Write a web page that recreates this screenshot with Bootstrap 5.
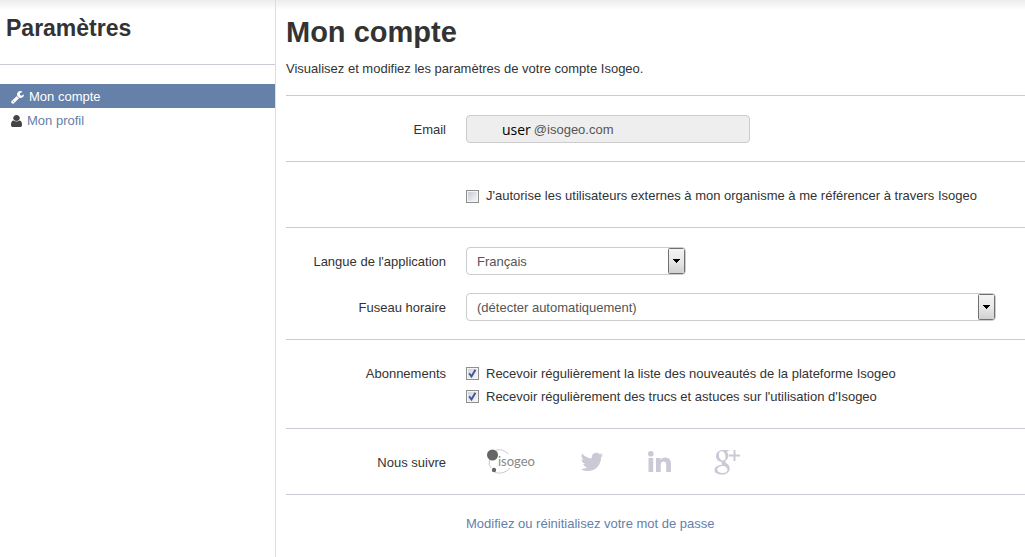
<!DOCTYPE html>
<html lang="fr">
<head>
<meta charset="utf-8">
<meta name="viewport" content="width=device-width, initial-scale=1">
<title>Mon compte - Isogeo</title>
<link rel="stylesheet" href="https://cdn.jsdelivr.net/npm/bootstrap@5.3.0/dist/css/bootstrap.min.css">
<style>
body{font:13px/18px "Liberation Sans",Arial,sans-serif;color:#333;background:#fff linear-gradient(#ececec,#fff) no-repeat 0 0/100% 10px}
a{color:#6580a9;text-decoration:none}
.side-panel{width:276px;border-right:1px solid #dcdce2}
.side-title{font-size:23px;line-height:28px;font-weight:700;padding:14px 6px 22px;border-bottom:1px solid #cac9d6}
.side-links{padding-top:19px}
.side-links .nav-link{height:24px;padding:2px 11px 0;color:#6580a9;gap:5px}
.side-links .nav-link svg{fill:#444}
.side-links .nav-link.active{background:#6580a9;color:#fff}
.side-links .nav-link.active svg{fill:#fff}
.main-panel{padding-left:10px}
.main-panel h1{font-size:29px;line-height:36px;font-weight:700;padding-top:14px;margin-bottom:10px}
.block{border-bottom:1px solid #cac9d6;padding:19px 0 18px}
.head-block{padding:0 0 17px}
.two-lines{gap:18px}
.line{gap:20px;min-height:28px}
.line-label{width:160px;text-align:right;flex:none;padding-top:2px}
.top-label{padding-top:6px}
.field{height:28px;border:1px solid #ccc;border-radius:4px;color:#555;font-size:13px;line-height:18px}
.mail{width:284px;background:#eee;padding:2px 0 0 35px;gap:3px}
.mail span{font:14px/18px "Open Sans",sans-serif;color:#000}
.mail input{background:none;border:0;padding:0;color:#555;min-width:0}
.field.form-select{padding:5px 30px 3px 10px;background-color:#fff;background-origin:border-box;background-position:right 0 center;background-size:18px 26px;
background-image:url("data:image/svg+xml,%3Csvg xmlns='http://www.w3.org/2000/svg' viewBox='0 0 18 26'%3E%3Cdefs%3E%3ClinearGradient id='g' x2='0' y2='1'%3E%3Cstop stop-color='%23f4f4f4'/%3E%3Cstop offset='.5' stop-color='%23e8e8e8'/%3E%3Cstop offset='1' stop-color='%23cfcfcf'/%3E%3C/linearGradient%3E%3C/defs%3E%3Crect x='.5' y='.5' width='16' height='25' rx='1' fill='url(%23g)' stroke='%23707070'/%3E%3Cpath d='M5 11h7v1h-1v1h-1v1h-1v1h-1v-1h-1v-1h-1v-1h-1z'/%3E%3C/svg%3E")}
.lang{width:220px}
.zone{width:530px}
.check-row{gap:7px;height:23px}
.line > .check-row{padding-top:2px}
.tick{appearance:none;width:13px;height:13px;margin:0;flex:none;border:1px solid #8e8f8f;background:linear-gradient(135deg,#c8ccd2,#f6f6f6) content-box,#f4f4f4;padding:1px}
.tick:checked{background:url("data:image/svg+xml,%3Csvg xmlns='http://www.w3.org/2000/svg' viewBox='0 0 11 11'%3E%3Cpath d='M2.2 5.2l2.3 3.3L8.4 1.8' fill='none' stroke='%233f5795' stroke-width='1.9'/%3E%3C/svg%3E") center/11px 11px no-repeat padding-box,linear-gradient(135deg,#d2d5da,#f6f6f6) content-box,#f4f4f4}
.subs{padding:3px 0 2px}
.social svg{display:block}
.social a{fill:#cac9d6}
.social{padding-left:20px}
</style>
</head>
<body>
<div class="d-flex min-vh-100">
  <aside class="side-panel flex-shrink-0">
    <h2 class="side-title mb-0">Paramètres</h2>
    <nav class="side-links nav flex-column">
      <a class="nav-link active d-flex align-items-center" href="#compte" aria-current="page">
        <svg width="13" height="13" viewBox="0 128 1664 1664" aria-hidden="true"><path d="M384 1472q0-26-19-45t-45-19-45 19-19 45 19 45 45 19 45-19 19-45zm644-420l-682 682q-37 37-90 37-52 0-91-37l-106-108q-38-36-38-90 0-53 38-91l681-681q39 98 114.500 173.500t173.500 114.500zm634-435q0 39-23 106-47 134-164.500 217.500t-258.500 83.500q-185 0-316.500-131.500t-131.500-316.500 131.500-316.500 316.500-131.500q58 0 121.500 16.500t107.500 46.500q16 11 16 28t-16 28l-293 169v224l193 107q5-3 79-48.500t135.500-81 70.500-35.500q15 0 23.500 10t8.500 25z"/></svg>
        Mon compte</a>
      <a class="nav-link d-flex align-items-center" href="#profil">
        <svg width="11" height="12" viewBox="0 128 1280 1536" preserveAspectRatio="none" aria-hidden="true"><path d="M1280 1399q0 109-62.500 187t-150.500 78h-854q-88 0-150.500-78t-62.500-187q0-85 8.500-160.500t31.500-152 58.500-131 94-89 134.500-34.500q131 128 313 128t313-128q76 0 134.500 34.500t94 89 58.500 131 31.500 152 8.500 160.500zm-256-887q0 159-112.500 271.500t-271.500 112.500-271.500-112.500-112.500-271.500 112.500-271.500 271.500-112.500 271.500 112.500 112.500 271.500z"/></svg>
        Mon profil</a>
    </nav>
  </aside>

  <main class="main-panel flex-grow-1">
    <header class="block head-block">
      <h1>Mon compte</h1>
      <p class="mb-0">Visualisez et modifiez les paramètres de votre compte Isogeo.</p>
    </header>
    <form>
      <section class="block">
        <div class="line d-flex align-items-center">
          <label class="line-label" for="email">Email</label>
          <div class="field mail d-flex align-items-center"><span>user</span><input id="email" class="flex-grow-1" type="text" value="@isogeo.com" readonly></div>
        </div>
      </section>
      <section class="block">
        <div class="line d-flex align-items-center">
          <div class="line-label"></div>
          <div class="check-row d-flex align-items-center"><input class="tick" type="checkbox" id="ext"><label for="ext">J'autorise les utilisateurs externes à mon organisme à me référencer à travers Isogeo</label></div>
        </div>
      </section>
      <section class="block two-lines d-grid">
        <div class="line d-flex align-items-center">
          <label class="line-label" for="lang">Langue de l'application</label>
          <select class="form-select field lang" id="lang"><option>Français</option></select>
        </div>
        <div class="line d-flex align-items-center">
          <label class="line-label" for="zone">Fuseau horaire</label>
          <select class="form-select field zone" id="zone"><option>(détecter automatiquement)</option></select>
        </div>
      </section>
      <section class="block">
        <div class="line d-flex">
          <div class="line-label top-label" id="subs">Abonnements</div>
          <div class="subs" role="group" aria-labelledby="subs">
            <div class="check-row d-flex align-items-center"><input class="tick" type="checkbox" id="news" checked><label for="news">Recevoir régulièrement la liste des nouveautés de la plateforme Isogeo</label></div>
            <div class="check-row d-flex align-items-center"><input class="tick" type="checkbox" id="tips" checked><label for="tips">Recevoir régulièrement des trucs et astuces sur l'utilisation d'Isogeo</label></div>
          </div>
        </div>
      </section>
      <section class="block">
        <div class="line d-flex align-items-center">
          <div class="line-label">Nous suivre</div>
          <div class="social d-flex align-items-center">
            <a href="#isogeo" aria-label="Isogeo"><svg width="95" height="28" viewBox="0 0 95 28"><path d="M10 2Q17 .5 22.500 6M24 20Q18 27 9 24.500M3.500 12Q2 17 5 20" fill="none" stroke="#ccc"/><circle cx="6.500" cy="7" r="5.500" fill="#666"/><circle cx="8" cy="22" r="2.200" fill="#666"/><text x="12" y="18" font-family="Lato, sans-serif" font-size="13" fill="#888">isogeo</text></svg></a>
            <a href="#twitter" aria-label="Twitter"><svg width="67" height="28" viewBox="0 0 67 28"><path transform="translate(-1 1) scale(.0144)" d="M1620 408q-67 98-162 167 1 14 1 42 0 130-38 259.500t-115.500 248.500-184.500 210.500-258 146-323 54.500q-271 0-496-145 35 4 78 4 225 0 401-138-105-2-188-64.500t-114-159.500q33 5 61 5 43 0 85-11-112-23-185.500-111.500t-73.500-205.500v-4q68 38 146 41-66-44-105-115t-39-154q0-88 44-163 121 149 294.500 238.500t371.500 99.500q-8-38-8-74 0-134 94.500-228.500t228.500-94.500q140 0 236 102 109-21 205-78-37 115-142 178 93-10 186-50z"/></svg></a>
            <a href="#linkedin" aria-label="LinkedIn"><svg width="66" height="28" viewBox="0 0 66 28"><circle cx="2.800" cy="5.800" r="2.800"/><path d="M.5 10h4.700v14H.5zM8 10h4.600v2Q14 9.600 17.300 9.600q5.600 0 5.600 6.400v8h-4.700v-7.400q0-3.200-2.500-3.200-3 0-3 3.400V24H8z"/></svg></a>
            <a href="#google" aria-label="Google+"><svg width="27" height="28" viewBox="0 0 27 28"><path fill-rule="evenodd" d="M15.500 2l-1.800 1.500h-1.500c1.400 1 2.200 2.500 2.200 4.300 0 2-1 3.200-2.200 4.200-1.300 1-1.500 2 .2 3.200 2.200 1.500 3.300 2.900 3.300 5.200 0 3.400-3 6.100-8.100 6.100C3.400 26.500.5 24.800.5 22c0-3.200 3.300-5.200 8-5.300-.9-1-1.100-1.900-.7-3-3.300.2-5.800-2.300-5.800-5.500C2 4.500 5 2 8.800 2zM7.600 3.300c-1.900 0-2.900 1.600-2.700 4 .2 2.800 1.800 5.200 3.900 5.200 1.800 0 2.900-1.500 2.700-4-.2-2.800-1.800-5.200-3.900-5.200zM9.500 18c-3.900 0-6.200 1.300-6.200 3.600s2.100 3.500 5.300 3.500c3.100 0 4.900-1.300 4.900-3.300 0-1.700-1.200-2.500-3-3.700z"/><path d="M19.500 2h2v4.500h4.500v2h-4.500V13h-2V8.500H15v-2h4.500z"/></svg></a>
          </div>
        </div>
      </section>
      <section class="line d-flex pt-3 mt-1">
        <div class="line-label"></div>
        <a href="#password">Modifiez ou réinitialisez votre mot de passe</a>
      </section>
    </form>
  </main>
</div>
<script src="https://cdn.jsdelivr.net/npm/bootstrap@5.3.0/dist/js/bootstrap.bundle.min.js"></script>
</body>
</html>
